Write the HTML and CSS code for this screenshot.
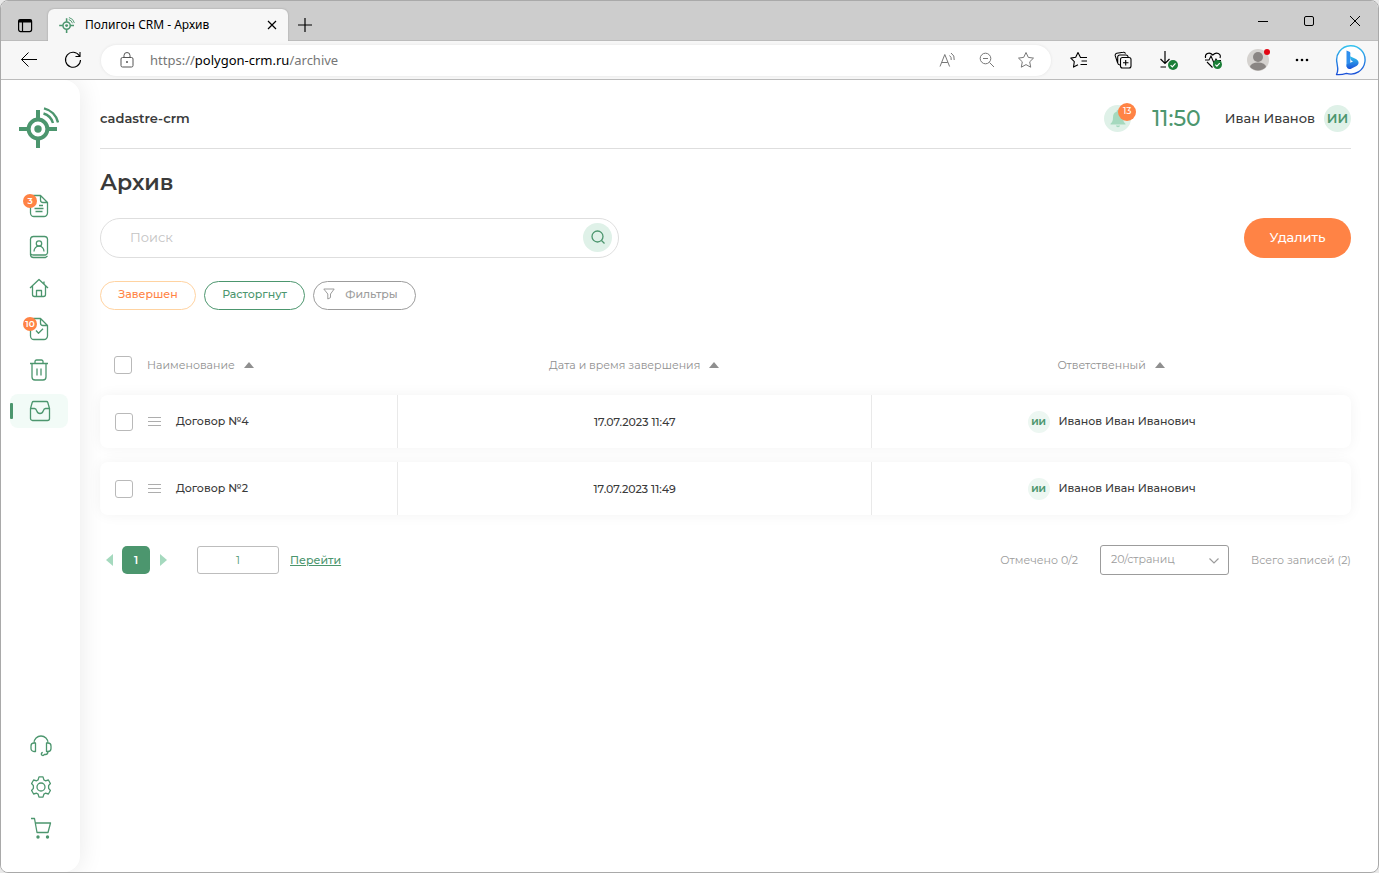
FILE: index.html
```html
<!DOCTYPE html>
<html lang="ru">
<head>
<meta charset="utf-8">
<title>Полигон CRM - Архив</title>
<link rel="stylesheet" href="styles.css">
</head>
<body>
<svg class="defs" aria-hidden="true">
  <symbol id="logo" viewBox="0 0 40 41">
    <g fill="none" stroke="currentColor">
      <circle cx="19" cy="22" r="9.4" stroke-width="4"/>
      <path d="M19 3v9M19 32v9M0 22h9M29 22h9" stroke-width="4"/>
      <path d="M24.500 6.500A14 14 0 0 1 34 16M25 1.300A19 19 0 0 1 39 15.500" stroke-width="2.400"/>
    </g>
    <circle cx="19" cy="22" r="3.700" fill="currentColor"/>
  </symbol>
  <symbol id="ok" viewBox="0 0 10 10">
    <circle cx="5" cy="5" r="5" fill="#1a7f37" stroke="none"/>
    <path d="M2.600 5.200l1.700 1.700 3.200-3.500" fill="none" stroke="#fff" stroke-width="1.200"/>
  </symbol>
</svg>
<div class="window">
  <div class="titlebar">
    <button class="chrome-btn tab-menu" aria-label="Меню вкладок"><svg width="16" height="16" viewBox="0 0 16 16" fill="none" stroke="#000" stroke-width="1.200"><rect x="1.600" y="2.600" width="13" height="12" rx="2"/><path d="M1.600 4h13" stroke-width="3"/><path d="M5.500 5v9.500"/></svg></button>
    <div class="tab">
      <svg class="green" width="16" height="16"><use href="#logo"/></svg>
      <span class="tab-title">Полигон CRM - Архив</span>
      <button class="chrome-btn" aria-label="Закрыть вкладку"><svg width="10" height="10" viewBox="0 0 10 10" stroke="#000" stroke-width="1.200"><path d="M1 1l8 8M9 1l-8 8"/></svg></button>
    </div>
    <button class="chrome-btn new-tab" aria-label="Новая вкладка"><svg width="14" height="14" viewBox="0 0 14 14" stroke="#000" stroke-width="1.200"><path d="M7 0v14M0 7h14"/></svg></button>
    <div class="win-controls">
      <button class="chrome-btn" aria-label="Свернуть"><svg width="10" height="10" viewBox="0 0 10 10" stroke="#000"><path d="M0 5.500h10"/></svg></button>
      <button class="chrome-btn" aria-label="Развернуть"><svg width="10" height="10" viewBox="0 0 10 10" fill="none" stroke="#000"><rect x=".5" y=".5" width="9" height="9" rx="1.500"/></svg></button>
      <button class="chrome-btn" aria-label="Закрыть"><svg width="10" height="10" viewBox="0 0 10 10" stroke="#000"><path d="M0 0l10 10M10 0L0 10"/></svg></button>
    </div>
  </div>

  <div class="toolbar">
    <button class="chrome-btn" aria-label="Назад"><svg width="18" height="18" viewBox="0 0 18 18" fill="none" stroke="#000"><path d="M17 8.500H1.500M8.500 1.500l-7 7 7 7"/></svg></button>
    <button class="chrome-btn reload" aria-label="Обновить"><svg width="18" height="18" viewBox="0 0 18 18" fill="none" stroke="#000" stroke-width="1.100"><path d="M15.500 5A7.500 7.500 0 1 0 16.500 9M16 1v4.500h-4.500"/></svg></button>
    <div class="address">
      <svg width="14" height="16" viewBox="0 0 14 16" fill="none" stroke="#555"><rect x="1" y="5.500" width="12" height="9.500" rx="1.500"/><path d="M4 5.500V3.500a3 3 0 0 1 6 0v2"/><circle cx="7" cy="10" r=".6" fill="#555"/></svg>
      <span class="url">https://<b>polygon-crm.ru</b>/archive</span>
      <svg width="18" height="16" viewBox="0 0 18 16" fill="none" stroke="#777"><path d="M1 14.500L5.800 2.500l4.800 12M2.800 10.500h6M10.500 3.500q2.200 1.500 1.700 4.500M12 1q4 2.500 3.200 7"/></svg>
      <svg width="16" height="16" viewBox="0 0 16 16" fill="none" stroke="#777"><circle cx="6.500" cy="6.500" r="5.300"/><path d="M10.500 10.500l4.500 4.500M4 6.500h5"/></svg>
      <svg width="18" height="18" viewBox="0 0 18 18" fill="none" stroke="#777" stroke-linejoin="round"><path d="M9 1.500l2.300 4.900 5.200.7-3.800 3.700 1 5.400L9 13.600l-4.700 2.600 1-5.400L1.500 7.100l5.200-.7z"/></svg>
    </div>
    <div class="tools">
      <button class="chrome-btn" aria-label="Избранное"><svg width="18" height="18" viewBox="0 0 18 18" fill="none" stroke="#000" stroke-width="1.100" stroke-linejoin="round"><path d="M17 6.500h-6.500L8 1.500 5.700 6.300l-4.900.8 3.500 3.500-.8 5.500L8 13.700M11.500 10H17M10.500 13.500H17"/></svg></button>
      <button class="chrome-btn" aria-label="Коллекции"><svg width="18" height="18" viewBox="0 0 18 18" fill="none" stroke="#000" stroke-width="1.100"><rect x="6.500" y="6.500" width="10.500" height="10.500" rx="2"/><path d="M11.700 9v5.500M9 11.700h5.500M6 14q-2-.3-2.300-2L2.800 9.500M3 10L1.200 4.700A2 2 0 0 1 2.700 2.300l6.500-1a2 2 0 0 1 2.300 1.400M3.700 12V6a2 2 0 0 1 2-2H12q1.800 0 2.300 2.500"/></svg></button>
      <button class="chrome-btn" aria-label="Загрузки"><svg width="20" height="20" viewBox="0 0 20 20" fill="none" stroke="#000" stroke-width="1.200"><path d="M7 1v12.500M2.500 9L7 13.500 11.500 9M2.500 17H8"/><use href="#ok" x="10" y="10" width="10" height="10"/></svg></button>
      <button class="chrome-btn" aria-label="Производительность"><svg width="18" height="18" viewBox="0 0 18 18" fill="none" stroke="#000" stroke-width="1.100"><path d="M1.500 7C.6 3 5 .2 8.800 4 12.600.2 17.500 3 16 7M1 9h4l2-4 3 7 2-4 1 1.500h4M3 11l5.500 5.500"/><use href="#ok" x="9" y="9" width="9" height="9"/></svg></button>
      <button class="chrome-btn profile" aria-label="Профиль"><svg width="26" height="26" viewBox="0 0 26 26"><circle cx="12" cy="13" r="11" fill="#d5d2cf"/><circle cx="12" cy="10" r="5" fill="#8a8583"/><path d="M4 20a8 4.500 0 0 1 16 0 11 11 0 0 1-16 0z" fill="#8a8583"/><circle cx="21" cy="5" r="3" fill="#e30613"/></svg></button>
      <button class="chrome-btn" aria-label="Ещё"><svg width="14" height="4" viewBox="0 0 14 4"><circle cx="2" cy="2" r="1.300"/><circle cx="7" cy="2" r="1.300"/><circle cx="12" cy="2" r="1.300"/></svg></button>
      <button class="chrome-btn bing" aria-label="Bing">
        <svg width="32" height="32" viewBox="0 0 32 32">
          <defs><linearGradient id="bg" x1="0" y1="0" x2="0" y2="1"><stop offset="0" stop-color="#35c3ee"/><stop offset="1" stop-color="#1b50d8"/></linearGradient></defs>
          <path d="M1.500 30.500Q3 28 2.700 24L2 19A14.200 14.200 0 1 1 11.500 29.400Q6 31 1.500 30.500z" fill="#fff" stroke="url(#bg)" stroke-width="1.400" stroke-linejoin="round"/>
          <path d="M11.500 6.500l3 1.300q.8.400.8 1.500V20l-3.800 3z" fill="#2f8fee"/><path d="M11.500 20.500l6.500-3-2-1.200q-1.300-2.300-1-4l6 2.600q3 1.600 2.500 4.600-.6 1.500-2 2.500L15.500 25q-4 .8-4-4.500z" fill="url(#bg)"/>
        </svg>
      </button>
    </div>
  </div>

  <div class="page">
    <aside class="sidebar">
      <a class="logo green" href="#" aria-label="Полигон CRM"><svg width="40" height="41"><use href="#logo"/></svg></a>
      <nav class="nav">
        <a href="#" aria-label="Договоры"><svg width="20" height="24" viewBox="0 0 20 24"><path d="M11.500 1.500H5A3.500 3.500 0 0 0 1.500 5v14A3.500 3.500 0 0 0 5 22.500h10a3.500 3.500 0 0 0 3.500-3.500V8.500l-7-7V6A2.500 2.500 0 0 0 14 8.500h4.500M5.500 14.500h9M6.500 17.500h7M10 11.500h4"/></svg><span class="badge">3</span></a>
        <a href="#" aria-label="Клиенты"><svg width="20" height="24" viewBox="0 0 20 24"><path d="M18.500 18.500V4A3 3 0 0 0 15.500 1.500h-11A3 3 0 0 0 1.500 4v15.500A3 3 0 0 0 4.500 22.500h12l2-1.500M1.500 18.500q1 1.500 3 1.500h12l2-1.500M5 16.500a5 5.500 0 0 1 10 0"/><circle cx="10" cy="8.500" r="2.700"/></svg></a>
        <a href="#" aria-label="Объекты"><svg width="20" height="20" viewBox="0 0 20 20"><path d="M1 10l9-8.500 9 8.500M3.500 8v8.500a2 2 0 0 0 2 2h9a2 2 0 0 0 2-2V8M7.500 18.500v-6h5v6M15 3.500v3"/></svg></a>
        <a href="#" aria-label="Задачи"><svg width="20" height="24" viewBox="0 0 20 24"><path d="M11.500 1.500H5A3.500 3.500 0 0 0 1.500 5v14A3.500 3.500 0 0 0 5 22.500h10a3.500 3.500 0 0 0 3.500-3.500V8.500l-7-7V6A2.500 2.500 0 0 0 14 8.500h4.500M7 13.500l2.500 2.800 4.500-4.500"/></svg><span class="badge">10</span></a>
        <a href="#" aria-label="Корзина"><svg width="20" height="22" viewBox="0 0 20 22"><path d="M1 4.500h18M6 4.500v-2A1.500 1.500 0 0 1 7.500 1h5A1.500 1.500 0 0 1 14 2.500v2M3 4.500V18a3 3 0 0 0 3 3h8a3 3 0 0 0 3-3V4.500M8 9.500v7M12 9.500v7"/></svg></a>
        <a class="active" href="#" aria-label="Архив" aria-current="page"><svg width="22" height="22" viewBox="0 0 22 22"><path d="M4.500 1.500h13q1 0 1.300 1l1.700 6v10a2 2 0 0 1-2 2h-15a2 2 0 0 1-2-2v-10l1.700-6q.3-1 1.300-1zM1.500 8.500h4q1.500 0 2.300 2.500t3.200 2.500 3.200-2.500 2.300-2.500h4"/></svg></a>
      </nav>
      <nav class="nav nav-bottom">
        <a href="#" aria-label="Поддержка"><svg width="22" height="22" viewBox="0 0 22 22"><path d="M4 8a7 7 0 0 1 14 0M5.500 8v8.500H4A3 3 0 0 1 1 13.500v-2.500A3 3 0 0 1 4 8zM16.500 8v8.500H18a3 3 0 0 0 3-3v-2.500A3 3 0 0 0 18 8zM18 16.500q0 3-2.500 3h-1.300a1.500 1.500 0 1 1-1.400-2"/></svg></a>
        <a href="#" aria-label="Настройки"><svg width="22" height="22" viewBox="0 0 22 22"><circle cx="11" cy="11" r="4"/><path d="M9 .9h4l.9 3 1.500.9 3-.8 2 3.500-1.800 2.200v2.600l1.800 2.200-2 3.500-3-.8-1.500.9-.9 3H9l-.9-3-1.500-.9-3 .8-2-3.500 1.800-2.200V9.700L1.600 7.500l2-3.500 3 .8 1.500-.9z"/></svg></a>
        <a href="#" aria-label="Заказы"><svg width="22" height="22" viewBox="0 0 22 22"><path d="M1 1.500h3.500L7 15.500h11L20.500 6H5.300"/><circle cx="8" cy="20" r="1.700" fill="currentColor" stroke="none"/><circle cx="17.500" cy="20" r="1.700" fill="currentColor" stroke="none"/></svg></a>
      </nav>
    </aside>

    <main class="main">
      <header class="header">
        <span class="company">cadastre-crm</span>
        <button class="bell" aria-label="Уведомления"><svg width="16" height="18" viewBox="0 0 16 18" fill="#a5d9be"><path d="M8 0a1.500 1.500 0 0 1 1.400 1.800C12 2.500 13 4.700 13 7.500c0 3.500 1 4.800 2.500 6.200v.8H.5v-.8C2 12.300 3 11 3 7.500c0-2.800 1-5 3.600-5.700A1.500 1.500 0 0 1 8 0zM5.800 15.500h4.400Q9.700 17.300 8 17.300t-2.200-1.800z"/></svg><span class="bell-count">13</span></button>
        <time class="clock">11:50</time>
        <span class="user">Иван Иванов</span>
        <span class="avatar">ИИ</span>
      </header>

      <h1>Архив</h1>

      <div class="actions">
        <form class="search">
          <input type="text" placeholder="Поиск" aria-label="Поиск">
          <button type="button" aria-label="Найти"><svg width="16" height="16" viewBox="0 0 16 16" fill="none" stroke="#4c966e" stroke-width="1.300"><circle cx="7.500" cy="7.500" r="5.500"/><path d="M11.500 11.500l3 3"/></svg></button>
        </form>
        <button class="delete">Удалить</button>
      </div>

      <div class="chips">
        <button class="chip chip-done">Завершен</button>
        <button class="chip chip-cancelled">Расторгнут</button>
        <button class="chip chip-filters"><svg width="12" height="12" viewBox="0 0 12 12" fill="none" stroke="#9c9c9c"><path d="M.8 1h10.400L7.500 6v3.600L4.800 11V6z"/></svg>Фильтры</button>
      </div>

      <table class="table">
        <thead>
          <tr>
            <th class="col-name"><div class="cell head-name"><input type="checkbox" aria-label="Выбрать все">Наименование<i class="sort"></i></div></th>
            <th class="col-date"><div class="cell center">Дата и время завершения<i class="sort"></i></div></th>
            <th><div class="cell center">Ответственный<i class="sort"></i></div></th>
          </tr>
        </thead>
        <tbody>
          <tr>
            <td><div class="cell"><input type="checkbox" aria-label="Договор №4"><i class="handle"></i><span class="label">Договор №4</span></div></td>
            <td><div class="cell center">17.07.2023 11:47</div></td>
            <td><div class="cell center"><span class="mini-avatar">ИИ</span><span class="label">Иванов Иван Иванович</span></div></td>
          </tr>
          <tr>
            <td><div class="cell"><input type="checkbox" aria-label="Договор №2"><i class="handle"></i><span class="label">Договор №2</span></div></td>
            <td><div class="cell center">17.07.2023 11:49</div></td>
            <td><div class="cell center"><span class="mini-avatar">ИИ</span><span class="label">Иванов Иван Иванович</span></div></td>
          </tr>
        </tbody>
      </table>

      <footer class="pager">
        <button class="arrow arrow-prev" aria-label="Предыдущая"></button>
        <button class="page-num">1</button>
        <button class="arrow arrow-next" aria-label="Следующая"></button>
        <input class="page-input" type="text" value="1" aria-label="Номер страницы">
        <a class="go" href="#">Перейти</a>
        <span class="marked">Отмечено 0/2</span>
        <span class="size">
          <select aria-label="Записей на странице"><option>20/страниц</option></select>
          <svg width="10" height="6" viewBox="0 0 10 6" fill="none" stroke="#9c9c9c" stroke-width="1.200"><path d="M.5.5L5 5 9.500.5"/></svg>
        </span>
        <span>Всего записей (2)</span>
      </footer>
    </main>
  </div>
</div>
</body>
</html>
```
FILE: styles.css
```css
* { box-sizing: border-box; }

body {
  margin: 0;
  background: #e9e9e9;
  font-family: Montserrat, Inter, sans-serif;
  font-size: 11px;
  color: #3a3a3a;
}

button, input, select { font: inherit; color: inherit; }
button { border: 0; padding: 0; background: none; cursor: pointer; }
svg { flex: none; }
.defs { position: absolute; width: 0; height: 0; }
.green { color: #4c966e; }

.window {
  display: flex;
  flex-direction: column;
  min-height: 100vh;
  border: 1px solid #a9a9a9;
  border-radius: 8px;
  overflow: hidden;
  background: #fff;
}

/* Browser frame */
.titlebar {
  display: flex;
  align-items: stretch;
  height: 40px;
  padding-top: 8px;
  background: #cdcdcd;
  border-bottom: 1px solid #bcbcbc;
  font-family: "Noto Sans", sans-serif;
}
.chrome-btn { display: flex; align-items: center; justify-content: center; }
.tab-menu { width: 47px; }
.tab {
  display: flex;
  align-items: center;
  gap: 10px;
  width: 240px;
  margin-bottom: -1px;
  padding: 0 11px 1px;
  border-radius: 6px 6px 0 0;
  background: #f7f7f7;
  box-shadow: 0 0 2px #999;
}
.tab-title { flex: 1; font-size: 12px; color: #000; white-space: nowrap; }
.new-tab { width: 34px; }
.win-controls { display: flex; margin-left: auto; margin-top: -8px; }
.win-controls .chrome-btn { width: 46px; }

.toolbar {
  position: relative;
  display: flex;
  align-items: center;
  height: 39px;
  padding: 0 11px 0 19px;
  background: #f7f7f7;
  border-bottom: 1px solid #bcbcbc;
  font-family: "Noto Sans", sans-serif;
}
.reload { margin: 0 19px 0 26px; }
.address {
  display: flex;
  flex: 1;
  align-items: center;
  gap: 22px;
  height: 31px;
  padding: 0 16px 0 19px;
  border-radius: 16px;
  background: #fff;
  box-shadow: 0 0 3px #e2e2e2;
}
.url { flex: 1; margin-left: -6px; font-size: 13px; color: #767676; }
.url b { font-weight: 400; color: #000; }
.tools { display: flex; align-items: center; gap: 26px; margin-left: 19px; }
.tools .profile { margin: 0 -3px 0 -2px; }

/* Application */
.page { display: flex; flex: 1; }
.sidebar {
  display: flex;
  flex-direction: column;
  width: 79px;
  padding: 27px 0;
  border-radius: 0 16px 16px 0;
  background: #fff;
  box-shadow: 0 0 26px rgba(0, 0, 0, .09);
}
.logo { margin-left: 18px; }
.logo svg { display: block; }
.nav {
  display: flex;
  flex-direction: column;
  gap: 7px;
  margin-top: 41px;
  padding: 0 12px 0 9px;
}
.nav-bottom { margin-top: auto; padding: 0 9px; }
.nav a {
  position: relative;
  display: flex;
  align-items: center;
  justify-content: center;
  height: 34px;
  border-radius: 8px;
  color: #4c966e;
}
.nav svg { fill: none; stroke: currentColor; stroke-width: 1.3; stroke-linejoin: round; }
.nav .active { padding-left: 2px; background: #f2fbf7; }
.nav .active::before {
  content: "";
  position: absolute;
  left: 0;
  top: 9px;
  width: 3px;
  height: 16px;
  border-radius: 1px;
  background: #4c966e;
}
.badge {
  position: absolute;
  left: 13px;
  top: 5px;
  width: 14px;
  height: 14px;
  border-radius: 50%;
  background: #ff8345;
  color: #fff;
  font-size: 9px;
  font-weight: 600;
  line-height: 13px;
  text-align: center;
}

.main { flex: 1; padding: 0 27px 27px 20px; }
.header {
  display: flex;
  align-items: center;
  padding: 25px 0 16px;
  border-bottom: 1px solid #dedede;
  font-size: 13px;
}
.company { flex: 1; padding-bottom: 2px; font-weight: 600; }
.bell {
  position: relative;
  display: flex;
  align-items: center;
  justify-content: center;
  width: 27px;
  height: 27px;
  border-radius: 50%;
  background: #dff1e8;
}
.bell-count {
  position: absolute;
  left: 14px;
  top: -2px;
  width: 18px;
  height: 18px;
  border-radius: 50%;
  background: #ff8345;
  color: #fff;
  font-size: 9px;
  font-weight: 500;
  line-height: 16px;
}
.clock { margin: 0 24px 0 21px; font-size: 22px; line-height: 27px; font-weight: 500; color: #4c966e; }
.user { padding-bottom: 2px; font-weight: 500; }
.avatar {
  width: 27px;
  height: 27px;
  margin-left: 9px;
  border-radius: 50%;
  background: #dff1e8;
  color: #4c966e;
  font-weight: 600;
  line-height: 27px;
  text-align: center;
}

h1 { margin: 19px 0 20px; font-size: 22px; line-height: 30px; font-weight: 600; }

.actions { display: flex; justify-content: space-between; }
.search {
  display: flex;
  align-items: center;
  width: 519px;
  height: 40px;
  padding: 0 6px 2px 0;
  border: 1px solid #dedede;
  border-radius: 20px;
}
.search input {
  flex: 1;
  padding: 0 29px;
  border: 0;
  outline: 0;
  background: none;
  font-size: 13px;
}
.search input::placeholder { color: #c4c4c4; }
.search button {
  display: flex;
  align-items: center;
  justify-content: center;
  width: 29px;
  height: 29px;
  border-radius: 50%;
  background: #dff1e8;
}
.delete {
  width: 107px;
  height: 40px;
  padding-bottom: 2px;
  border-radius: 20px;
  background: #ff8345;
  color: #fff;
  font-size: 13px;
  font-weight: 500;
}

.chips { display: flex; gap: 8px; margin-top: 23px; }
.chip {
  display: flex;
  align-items: center;
  justify-content: center;
  width: 101px;
  height: 29px;
  padding-bottom: 3px;
  border: 1px solid;
  border-radius: 15px;
  font-weight: 500;
}
.chip-done { width: 96px; border-color: #ffd3a1; color: #ff8345; }
.chip-cancelled { color: #4c966e; }
.chip-filters { gap: 10px; width: 103px; padding-right: 8px; color: #9c9c9c; }

.table {
  width: 100%;
  margin-top: 26px;
  border-spacing: 0 14px;
  table-layout: fixed;
}
.table th, .table td { padding: 0; }
.table th { height: 31px; padding-bottom: 2px; color: #8f8f8f; font-weight: 400; }
.table td { height: 53px; font-weight: 500; }
.col-name { width: 23.75%; }
.col-date { width: 37.9%; }
.table tbody tr { border-radius: 8px; box-shadow: 0 0 14px rgba(0, 0, 0, .05); }
.table td + td { border-left: 1px solid #e9e9e9; }
.cell { display: flex; align-items: center; padding-left: 15px; }
.head-name { padding-left: 14px; }
.center { justify-content: center; padding-left: 0; }
.label { padding-bottom: 2px; }
.table input {
  appearance: none;
  flex: none;
  width: 18px;
  height: 18px;
  margin: 0 15px 0 0;
  border: 1px solid #b9b9b9;
  border-radius: 3px;
}
.sort {
  margin-left: 9px;
  border: 5px solid transparent;
  border-top: 0;
  border-bottom: 6px solid #8f8f8f;
}
.handle {
  width: 13px;
  height: 9px;
  margin-right: 15px;
  background: repeating-linear-gradient(#adadad 0 1px, transparent 1px 4px);
}
.mini-avatar {
  width: 22px;
  height: 22px;
  margin-right: 9px;
  border-radius: 50%;
  background: #edf7f2;
  color: #4c966e;
  font-size: 9px;
  font-weight: 700;
  line-height: 22px;
  text-align: center;
}

.pager { display: flex; align-items: center; margin-top: 16px; color: #9c9c9c; }
.arrow { width: 0; height: 0; border: 6px solid transparent; }
.arrow-prev { margin: 0 9px 0 6px; border-left: 0; border-right: 7px solid #a5d9be; }
.arrow-next { margin: 0 30px 0 10px; border-right: 0; border-left: 7px solid #a5d9be; }
.page-num { width: 28px; height: 28px; border-radius: 5px; background: #4c966e; color: #fff; font-weight: 600; }
.page-input {
  width: 82px;
  height: 28px;
  border: 1px solid #bdbdbd;
  border-radius: 3px;
  color: #4c966e;
  text-align: center;
}
.go { margin-left: 11px; color: #4c966e; font-weight: 500; text-underline-offset: 1px; }
.marked { margin-left: auto; }
.size { position: relative; margin: 0 22px; }
.size select {
  display: block;
  appearance: none;
  width: 129px;
  height: 30px;
  padding: 0 24px 3px 10px;
  border: 1px solid #9c9c9c;
  border-radius: 3px;
  background: #fff;
}
.size svg { position: absolute; right: 10px; top: 13px; }
```
